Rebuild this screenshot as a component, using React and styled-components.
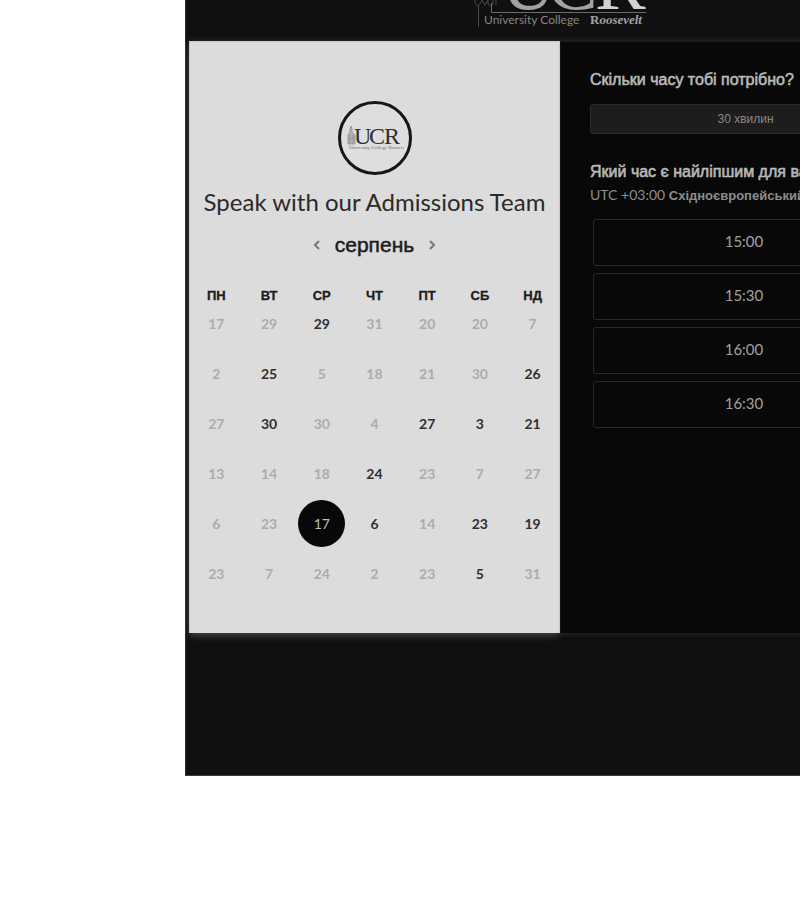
import React, { useState } from "react";
import styled, { createGlobalStyle } from "styled-components";

const GlobalStyle = createGlobalStyle`
  * { box-sizing: border-box; }
  body {
    margin: 0;
    background: #ffffff;
    font-family: "Liberation Sans", Arial, sans-serif;
    overflow-x: hidden;
  }
  button { font: inherit; cursor: pointer; }
`;

const Page = styled.main`
  display: flex;
  padding-left: 185px;
  overflow: hidden;
`;

const Widget = styled.div`
  flex: 1 0 750px;
  padding: 0 4px 142px;
  overflow: hidden;
  background: #101010;
  border-left: 1px solid #303030;
  border-bottom: 1px solid #3a3a3a;
`;

const Header = styled.header`
  display: flex;
  justify-content: center;
  align-items: flex-end;
  height: 41px;
  padding-bottom: 12px;
  overflow: hidden;

  svg { flex: none; display: block; }
`;

const Card = styled.div`
  display: grid;
  grid-template-columns: 1fr 1fr;
  margin-left: -1px;
  box-shadow: 0 0 6px #303030;
`;

const CalendarPanel = styled.section`
  min-height: 592px;
  padding: 59px 0 33px;
  display: flex;
  flex-direction: column;
  align-items: center;
  background: #dcdcdc;
  border: 1px solid #c8c8c8;
  border-bottom: 0;
  box-shadow: 0 4px 8px -2px #4a4d4a;
  color: #1c1c1c;
`;

const Avatar = styled.div`
  width: 74px;
  height: 74px;
  border: 3px solid #161616;
  border-radius: 50%;
  display: grid;
  place-items: center;
  background: #dedede;
`;

const Title = styled.h1`
  margin: 12px 0 0;
  font: 400 24px/30px Lato, sans-serif;
  white-space: nowrap;
  color: #2a2a2a;
`;

const MonthBar = styled.div`
  display: flex;
  align-items: center;
  gap: 12px;
  margin: 15px 0 33px;
`;

const Month = styled.h2`
  margin: 0;
  font-size: 21px;
  line-height: 26px;
  font-weight: 400;
  -webkit-text-stroke: 0.5px currentColor;
`;

const Arrow = styled.button`
  display: grid;
  place-items: center;
  width: 12px;
  height: 24px;
  padding: 0;
  border: 0;
  background: none;
  color: #777777;
`;

const Calendar = styled.table`
  width: 100%;
  table-layout: fixed;
  border-collapse: collapse;

  th {
    height: 9px;
    padding: 0;
    font-size: 13px;
    line-height: 9px;
    font-weight: 700;
    text-align: center;
    -webkit-text-stroke: 0.3px currentColor;
  }

  td {
    height: 50px;
    padding: 0;
    vertical-align: top;
    text-align: center;
  }
`;

const Day = styled.button`
  width: 47px;
  height: 47px;
  padding: 0;
  border: 0;
  border-radius: 50%;
  font-family: Lato, sans-serif;
  font-size: 14px;
  font-weight: ${({ $selected }) => ($selected ? 400 : 700)};
  background: ${({ $selected }) => ($selected ? "#080808" : "transparent")};
  color: ${({ $selected }) => ($selected ? "#bdbdbd" : "#303030")};

  &:disabled {
    color: #acacac;
    cursor: default;
  }
`;

const TimesPanel = styled.section`
  padding: 28px 30px 28px 29px;
  background: #080808;
  border-left: 1px solid #141414;
  border-top: 1px solid #1b1b1b;
  color: #b8b8b8;
  white-space: nowrap;
`;

const Question = styled.h2`
  margin: 0;
  font-size: 16px;
  line-height: 20px;
  font-weight: 400;
  -webkit-text-stroke: 0.6px currentColor;
`;

const Duration = styled.button`
  display: block;
  width: 100%;
  height: 30px;
  margin: 14px 0 28px;
  border: 1px solid #2a2a2a;
  border-radius: 3px;
  background: #1d1d1d;
  color: #888888;
  font-size: 12px;
`;

const Zone = styled.p`
  margin: 3px 0 13px;
  font-size: 13px;
  line-height: 20px;
  font-weight: 700;
  color: #8e8e8e;
`;

const Offset = styled.span`
  font-family: Lato, sans-serif;
  font-size: 14px;
  font-weight: 400;
`;

const Slots = styled.ul`
  display: grid;
  gap: 7px;
  margin: 0;
  padding: 0 6px 0 3px;
  list-style: none;
`;

const Slot = styled.button`
  display: block;
  width: 100%;
  height: 47px;
  padding: 0 0 3px;
  border: 1px solid #282828;
  border-radius: 3px;
  background: #080808;
  color: #a0a0a0;
  font-family: Lato, sans-serif;
  font-size: 15px;
`;

const weekdays = ["ПН", "ВТ", "СР", "ЧТ", "ПТ", "СБ", "НД"];
const weeks = [
  { days: [17, 29, 29, 31, 20, 20, 7], open: [2] },
  { days: [2, 25, 5, 18, 21, 30, 26], open: [1, 6] },
  { days: [27, 30, 30, 4, 27, 3, 21], open: [1, 4, 5, 6] },
  { days: [13, 14, 18, 24, 23, 7, 27], open: [3] },
  { days: [6, 23, 17, 6, 14, 23, 19], open: [2, 3, 5, 6] },
  { days: [23, 7, 24, 2, 23, 5, 31], open: [5] },
];
const times = ["15:00", "15:30", "16:00", "16:30"];

function HeaderLogo() {
  return (
    <svg width="174" height="70" viewBox="0 0 174 70" role="img" aria-label="University College Roosevelt">
      <g fill="none" stroke="#4b4b4b">
        <path d="M4.500 68V46M1 41V44Q3 48 6 45L8 41L11 46L14 41V45Q16 48 19 45V41M22 41V46" />
        <path d="M17.500 44V53.500H172" stroke="#6b6b6b" />
      </g>
      <g fontFamily="Liberation Serif, serif" fontSize="76">
        <text x="27" y="50" fill="#a2a2a2">U</text>
        <text x="73" y="50" fill="#a2a2a2">C</text>
        <text x="121" y="50" fill="#d2d2d2">R</text>
      </g>
      <text x="10" y="65" fontFamily="Lato, sans-serif" fontSize="12" fill="#858585">University College</text>
      <text x="116" y="65" fontFamily="Liberation Serif, serif" fontSize="13" fontWeight="700" fill="#a2a2a2">
        R<tspan fontStyle="italic">oosevelt</tspan>
      </text>
    </svg>
  );
}

function BadgeLogo() {
  return (
    <svg width="58" height="32" viewBox="0 0 58 32" role="img" aria-label="UCR">
      <path d="M2 22V13L4 10V7L5 4L6 7V10L9 13V22ZM4 12V22M7 12V22M2 16H9" fill="#b4b4b4" stroke="#999" />
      <g fontFamily="Liberation Serif, serif" fontSize="24" fill="#303030">
        <text x="8" y="22">U</text>
        <text x="23" y="22">C</text>
        <text x="38" y="22">R</text>
      </g>
      <text x="3" y="27" fontFamily="Liberation Serif, serif" fontSize="5" fill="#686868">University College Roosevelt</text>
    </svg>
  );
}

function Chevron({ d }) {
  return (
    <svg width="8" height="12" viewBox="0 0 8 12" fill="none" stroke="currentColor" strokeWidth="2" aria-hidden="true">
      <path d={d} />
    </svg>
  );
}

export default function App() {
  const [selected, setSelected] = useState("4-2");

  return (
    <>
      <GlobalStyle />
      <Page>
        <Widget>
          <Header><HeaderLogo /></Header>
          <Card>
            <CalendarPanel>
              <Avatar><BadgeLogo /></Avatar>
              <Title>Speak with our Admissions Team</Title>
              <MonthBar>
                <Arrow aria-label="Попередній місяць"><Chevron d="M6 2L2 6L6 10" /></Arrow>
                <Month>серпень</Month>
                <Arrow aria-label="Наступний місяць"><Chevron d="M2 2L6 6L2 10" /></Arrow>
              </MonthBar>
              <Calendar>
                <thead>
                  <tr>{weekdays.map((d) => <th key={d} scope="col">{d}</th>)}</tr>
                </thead>
                <tbody>
                  {weeks.map((week, w) => (
                    <tr key={w}>
                      {week.days.map((day, i) => {
                        const id = `${w}-${i}`;
                        return (
                          <td key={id}>
                            <Day
                              disabled={!week.open.includes(i)}
                              $selected={selected === id}
                              aria-pressed={selected === id}
                              onClick={() => setSelected(id)}
                            >
                              {day}
                            </Day>
                          </td>
                        );
                      })}
                    </tr>
                  ))}
                </tbody>
              </Calendar>
            </CalendarPanel>
            <TimesPanel>
              <Question>Скільки часу тобі потрібно?</Question>
              <Duration>30 хвилин</Duration>
              <Question>Який час є найліпшим для вас?</Question>
              <Zone><Offset>UTC +03:00</Offset> Східноєвропейський час</Zone>
              <Slots>
                {times.map((t) => <li key={t}><Slot>{t}</Slot></li>)}
              </Slots>
            </TimesPanel>
          </Card>
        </Widget>
      </Page>
    </>
  );
}
